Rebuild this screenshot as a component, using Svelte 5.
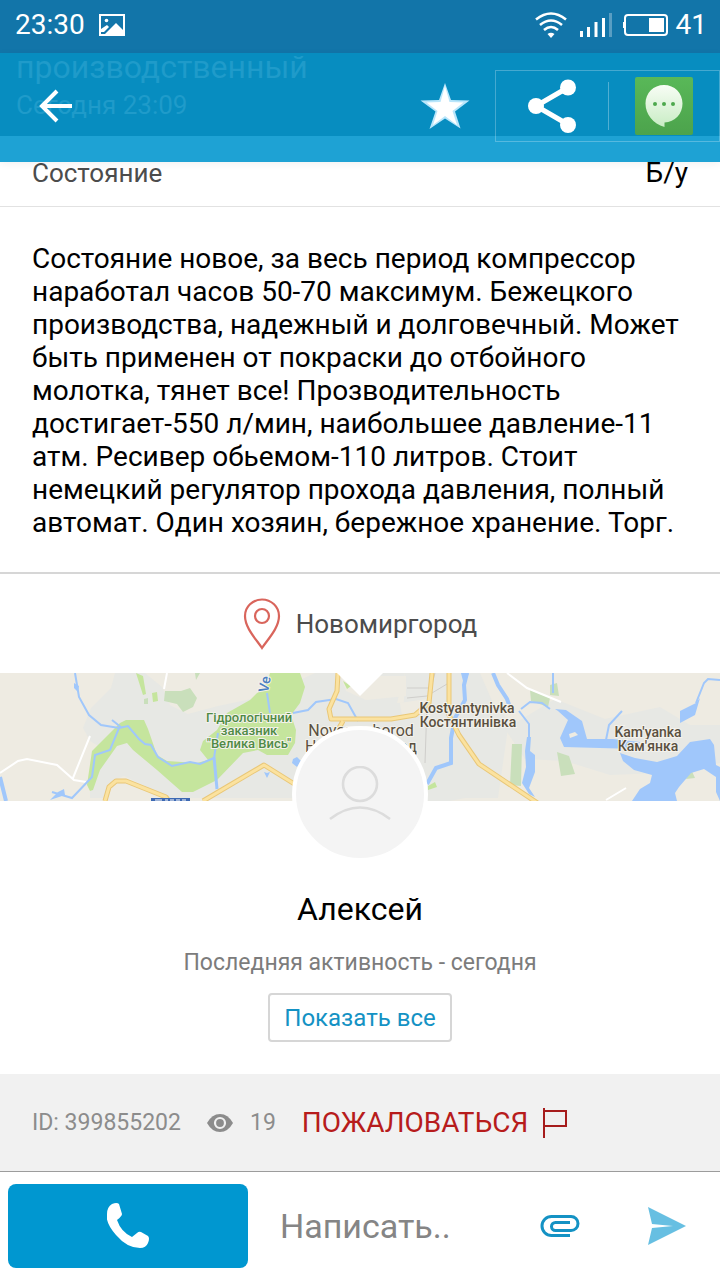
<script lang="ts">
	const ad = {
		title: 'производственный',
		posted: 'Сегодня 23:09',
		condition: 'Б/у',
		city: 'Новомиргород',
		id: '399855202',
		views: 19,
		description:
			'Состояние новое, за весь период компрессор наработал часов 50-70 максимум. Бежецкого производства, надежный и долговечный. Может быть применен от покраски до отбойного молотка, тянет все! Прозводительность достигает-550 л/мин, наибольшее давление-11 атм. Ресивер обьемом-110 литров. Стоит немецкий регулятор прохода давления, полный автомат. Один хозяин, бережное хранение. Торг.'
	};
	const seller = { name: 'Алексей', activity: 'сегодня' };

	let message = $state('');
</script>

<main class="screen">
	<div class="status">
		<span>23:30</span>
		<svg class="picture" width="26" height="22" viewBox="0 0 26 22">
			<path d="M1 1h24v20H1z" fill="none" stroke="#fff" stroke-width="2" />
			<path d="M6 20L17 9l8 8v4H6z" fill="#fff" />
			<path d="M2 15l6-4 2 2-5 5H2z" fill="#fff" />
			<circle cx="7.500" cy="6.500" r="1.800" fill="#fff" />
		</svg>
		<span class="grow"></span>
		<svg width="34" height="28" viewBox="0 0 34 28" fill="none" stroke="#fff" stroke-width="2.600">
			<path d="M2 8.500Q17-3.500 32 8.500M6 14q11-9 22 0M10 19q7-6 14 0" />
			<path d="M13.500 23q3.500-2.500 7 0L17 27z" fill="#fff" stroke="none" />
		</svg>
		<svg class="signal" width="32" height="26" viewBox="0 0 32 26" fill="#fff">
			<path d="M0 19h3v6H0zM7 15h3v10H7zM14.500 10h3v15h-3zM22 6h3v19h-3z" />
			<path d="M29 1h3v24h-3z" opacity=".3" />
		</svg>
		<svg class="battery" width="45" height="24" viewBox="0 0 45 24">
			<rect x="2" y="2" width="42" height="20" rx="3" fill="none" stroke="#fff" stroke-width="2" />
			<path d="M0 9h2v6H0zM26 5h15v14H26z" fill="#fff" />
		</svg>
		<span>41</span>
	</div>

	<header class="toolbar">
		<div class="under" aria-hidden="true">
			<div class="under-title">{ad.title}</div>
			<div class="under-date">{ad.posted}</div>
		</div>
		<button type="button" class="icon back" aria-label="Назад">
			<svg width="34" height="34" viewBox="0 0 34 34" fill="none" stroke="#fff" stroke-width="4">
				<path d="M18 2L3 17l15 15M2.500 17H33" />
			</svg>
		</button>
		<span class="grow"></span>
		<button type="button" class="icon star" aria-label="В избранное">
			<svg width="50" height="48" viewBox="0 0 50 48">
				<path d="M25 1l6 17 18.500.500-14.500 11 5.500 17L25 36.500 9.500 47l6-17.500L.500 18.500 19 18z" fill="#b9e6fb" />
				<path d="M25 4l4.500 16 14 .500-11 8.500 4.500 14-12-9-12 9 4.500-14-11-8.500 14-.500z" fill="#fff" />
			</svg>
		</button>
		<div class="share-box">
			<button type="button" class="icon share" aria-label="Поделиться">
				<svg width="50" height="54" viewBox="0 0 50 54" fill="#fff">
					<path d="M41 8.500L9 27l32 18.500" fill="none" stroke="#fff" stroke-width="5" />
					<circle cx="41" cy="8.500" r="8" />
					<circle cx="9" cy="27" r="8" />
					<circle cx="41" cy="46" r="8" />
				</svg>
			</button>
			<button type="button" class="icon sms" aria-label="Сообщения">
				<svg width="58" height="58" viewBox="0 0 58 58">
					<defs>
						<linearGradient id="tile" x2="0" y2="1">
							<stop offset="0" stop-color="#59b858" />
							<stop offset="1" stop-color="#4ca34c" />
						</linearGradient>
						<linearGradient id="bubble" x2="0" y2="1">
							<stop offset="0" stop-color="#f8fdf5" />
							<stop offset="1" stop-color="#c8ecc4" />
						</linearGradient>
					</defs>
					<rect width="58" height="58" rx="2" fill="url(#tile)" />
					<path d="M29 8c10.500 0 18.500 8 18.500 18.500S40 45 29.500 45.500V50C18 47 10.500 37 10.500 26.500S18.500 8 29 8z" fill="url(#bubble)" />
					<g fill="#4da84d">
						<circle cx="20" cy="27" r="2" />
						<circle cx="29" cy="27" r="2" />
						<circle cx="38" cy="27" r="2" />
					</g>
				</svg>
			</button>
		</div>
	</header>

	<div class="param">
		<span class="param-name">Состояние</span>
		<span class="param-value">{ad.condition}</span>
	</div>

	<p class="description">{ad.description}</p>

	<div class="location">
		<svg width="38" height="52" viewBox="0 0 38 52" fill="none" stroke="#d9655c" stroke-width="2.200">
			<path d="M19 50C13 41 2 30 2 18a17 16.500 0 0 1 34 0c0 12-11 23-17 32z" />
			<circle cx="19" cy="18" r="7" />
		</svg>
		<span>{ad.city}</span>
	</div>

	<div class="map">
		<svg viewBox="0 0 720 128" preserveAspectRatio="xMidYMid slice" role="img" aria-label="Карта">
			<rect width="720" height="128" fill="#eeebe2" />
			<!-- built-up land -->
			<g fill="#e7e8e4">
				<path d="M115 0h30l17 14 8 18 18 9 30-8 47-10 50-23h90l-8 30 80-4 26 9 5 20-10 70H90v-15l20-30-20-12-7-13 8-20 20-20z" />
				<path d="M405 0h75l13 30-3 90-40 8h-50z" />
				<path d="M555 26l50 20 55-12 30 18h30v38l-60 10-50 2-45-14-40-2-20-30z" />
			</g>
			<path d="M112 108l12-5 45 21-2 4h-60z" fill="#eeebe2" />
			<path d="M340 3h66v20l-40 4-20-9zM400 30l26-4v14l-24 3z" fill="#eeebe2" />
			<!-- parks -->
			<g fill="#c5e59d">
				<path d="M120 50l6-3h18l4 9 9 26 10 6 30 2 11-3-8-10 3-9 14-11 10-17 23-13 17-17 3-10h30l5 14-5 16-9 12 5 15-1 13-7 12h-21l-9-5-15 3-26 27-24 12h-11l-25-22-24-20-6-7-10 3-17 24-7 20-3 1-3-6 5-34z" />
				<path d="M136 0l7 3 3 18-3 1zM152 20l5-1 1 9-5 1zM428 113l7-4 2 5-9 3zM343 8l4 8 4-3z" />
			</g>
			<g fill="#c9dfbb">
				<path d="M165 18h16l9-3 7 10-4 9-10 5-6-8-13-3zM195 0h5l-4 7zM530 17l20 8-2 9-17-6zM550 12l7-2 2 13-9-1zM512 71h10l-1 42-11-1zM557 79l12 4 6 18-14 2zM690 94l5 11-9 1zM144 26l4-1v6h-4z" />
			</g>
			<!-- local roads -->
			<g fill="none" stroke="#fff" stroke-width="2">
				<path d="M0 100l18-12 9-2 30 6 17 15 12 2M73 105l17-42M507 0l20 15 34 14M606 127l20-12M167 0l-3 16" />
			</g>
			<path d="M435 0l-8 30-2 60M407 15h22M407 25l20-2 20-12" fill="none" stroke="#cfcecb" stroke-width="1" />
			<!-- water -->
			<g fill="none" stroke="#a0c7fb" stroke-width="2">
				<path d="M75 0l4 24 10 18 12 10 18 3 9-2 11 13 6 5 6 1 7 12 14 9 18-4 10 2 14-6 4-25M119 55l-9 22-15 5-3 22-20 21-20-6M112 47l10 8M267 20l3 20M293 40l15-3 8-8 20-3 12 4 10 18M521 36l9-7 12 1 8 6M519 38l10 13v15M553 0v20M606 67l3-15 13-14M696 30l8-20 4-4 12 1" />
			</g>
			<g fill="none" stroke="#a0c7fb" stroke-width="4">
				<path d="M467 0l-3 12 1 15-10 18-4 20v25l-15 5-9 16M493 0l5 12 9 14 5 14M0 104l6 24" />
				<path d="M214 84l3 32" stroke-width="3" />
			</g>
			<g fill="#a0c7fb">
				<path d="M527 64h4l-1 14 5 4v17l-6 16 6 9-6-3-7-11 4-16-1-16zM555 36l11 1 16 11 5 18 26 0 27 3-4 7-72-2-4-9 8-18-10-9zM620 80l15 5 22 4 20-6 13-14 20-3 4 6 2 20 4 2v10h-4l-12-8-13 4-12 14-4 6 2 8h-45l8-12 10-6 2-8-18-5-11-9zM680 38l16-8 4-5-5 17-15 8zM716 100h4v28l-4-9zM461 0h8l-5 12zM74 10l5 3-1 6-4-4zM50 127l8-8 6-3 1 6zM293 86l4-2 4 4-4 6-5-4zM264 99l3 1 3-1-3 6z" />
			</g>
			<path d="M569 61l6-2 3 3-8 3z" fill="#eeebe2" />
			<!-- highways -->
			<g fill="none" stroke-linejoin="round">
				<path d="M105 128l4-14 7-6h10l40 16 4 6M203 128l61-36 32 20M338 0l-1 18-8 18 2 10h60l24-4 14-12 3-30M449 0v42l10 20 20 29 60 40M335 62l8-14" stroke="#e9c777" stroke-width="5" />
				<path d="M105 128l4-14 7-6h10l40 16 4 6M203 128l61-36 32 20M338 0l-1 18-8 18 2 10h60l24-4 14-12 3-30M449 0v42l10 20 20 29 60 40M335 62l8-14" stroke="#fbe29f" stroke-width="3" />
			</g>
			<!-- road shield, cropped by the map's edge -->
			<rect x="151" y="125" width="39" height="12" fill="#3d69b3" />
			<path d="M155 127h7M165 127h3M170 127h4M176 127h4M182 127h4" stroke="#fff" stroke-width="1" />
			<g class="labels" text-anchor="middle">
				<g class="reserve">
					<text x="249" y="49">Гідрологічний</text>
					<text x="249" y="62">заказник</text>
					<text x="249" y="75">"Велика Вись"</text>
				</g>
				<text class="river" transform="translate(268 20) rotate(-80)" text-anchor="start">Ve</text>
				<g class="town">
					<text x="361" y="63">Novomyrhorod</text>
					<text x="361" y="79">Новомиргород</text>
				</g>
				<text x="467" y="40">Kostyantynivka</text>
				<text x="468" y="54">Костянтинівка</text>
				<text x="648" y="64">Kam'yanka</text>
				<text x="648" y="78">Кам'янка</text>
			</g>
		</svg>
		<span class="notch"></span>
	</div>

	<section class="seller">
		<div class="avatar">
			<svg width="64" height="56" viewBox="0 0 64 56" fill="none" stroke="#dcdcdc" stroke-width="2.600">
				<circle cx="32" cy="18" r="17" />
				<path d="M2 53Q32 30 62 53" />
			</svg>
		</div>
		<h1>{seller.name}</h1>
		<p class="activity">Последняя активность - {seller.activity}</p>
		<button type="button" class="all">Показать все</button>
	</section>

	<div class="meta">
		<span>ID: {ad.id}</span>
		<svg class="eye" width="26" height="18" viewBox="0 0 26 18">
			<path d="M0 9Q5 0 13 0t13 9q-5 9-13 9T0 9z" fill="#8c8c8c" />
			<circle cx="13" cy="9" r="5" fill="#8c8c8c" stroke="#f1f1f1" stroke-width="2.200" />
		</svg>
		<span>{ad.views}</span>
		<button type="button" class="complain">
			Пожаловаться
			<svg width="26" height="30" viewBox="0 0 26 30" fill="none" stroke="#a61c1c" stroke-width="2">
				<path d="M2 0v30M2 3h22v15H2" />
			</svg>
		</button>
	</div>

	<form class="reply" onsubmit={(e) => e.preventDefault()}>
		<button type="button" class="call" aria-label="Позвонить">
			<svg width="42" height="46" viewBox="0 0 42 46">
				<path d="M5 1q5-2 7 0l3 10q0 2-5 6 4 12 15 17l5-4q2-2 4-1l7 4q2 2 0 7-2 5-8 5-13 0-24-13T0 11q0-7 5-10z" fill="#fff" />
			</svg>
		</button>
		<input type="text" placeholder="Написать.." aria-label="Написать" bind:value={message} />
		<button type="button" class="icon clip" aria-label="Прикрепить файл">
			<svg width="40" height="24" viewBox="0 0 40 24" fill="none" stroke="#1492c4" stroke-width="3">
				<path d="M30 21.500H11.500a9.500 9.500 0 0 1 0-19H31a7 7 0 0 1 0 14H15.500a4 4 0 0 1 0-8H30" />
			</svg>
		</button>
		<button type="submit" class="icon send" aria-label="Отправить">
			<svg width="38" height="38" viewBox="0 0 38 38">
				<path d="M0 0l38 19L0 38l4-17 21-2-21-2z" fill="#67bfe2" />
			</svg>
		</button>
	</form>
</main>

<style>
	:global(body) {
		margin: 0;
		background: #fff;
	}
	.screen {
		display: flex;
		flex-direction: column;
		min-height: 100vh;
		font-family: Roboto, 'Noto Sans', sans-serif;
		font-size: 26px;
		color: #000;
		background: #fff;
	}
	button {
		font: inherit;
		cursor: pointer;
	}
	svg {
		display: block;
		flex: none;
	}
	.icon {
		display: flex;
		padding: 0;
		border: 0;
		background: none;
	}
	.grow {
		flex: 1;
	}

	.status {
		display: flex;
		align-items: center;
		height: 49px;
		padding: 0 13px 4px 15px;
		font-size: 28px;
		color: #fff;
		background: #1275a9;
	}
	.picture {
		margin-left: 14px;
	}
	.signal {
		margin: 0 11px 0 12px;
	}
	.battery {
		margin-right: 8px;
	}

	.toolbar {
		position: relative;
		display: flex;
		align-items: center;
		height: 106px;
		padding-bottom: 3px;
		background: linear-gradient(#078dc0 0 83px, #1ea2d4 83px);
		box-shadow: 0 2px 8px rgba(0, 0, 0, 0.06);
	}
	.under {
		position: absolute;
		top: 0;
		left: 16px;
		color: #1f9bca;
	}
	.under-title {
		font-size: 32px;
		line-height: 28px;
	}
	.under-date {
		margin-top: 8px;
		line-height: 32px;
	}
	.back {
		position: relative;
		margin-left: 39px;
	}
	.star {
		margin-right: 25px;
	}
	.share-box {
		display: flex;
		align-items: center;
		box-sizing: border-box;
		height: 72px;
		border: 1px solid rgba(255, 255, 255, 0.25);
	}
	.share {
		padding: 0 31px;
	}
	.sms {
		position: relative;
		padding: 0 26px 0 27px;
	}
	.sms::before {
		content: '';
		position: absolute;
		left: 0;
		top: 5px;
		width: 1px;
		height: 48px;
		background: rgba(255, 255, 255, 0.3);
	}

	.param {
		display: flex;
		justify-content: space-between;
		padding: 0 32px 22px;
		line-height: 22px;
		border-bottom: 1px solid #e2e2e2;
	}
	.param-name {
		color: #4c4c4c;
	}
	.param-value {
		font-size: 28px;
	}

	.description {
		margin: 0;
		padding: 35px 32px 33px;
		font-size: 28px;
		line-height: 33px;
		border-bottom: 2px solid #d6d6d6;
	}

	.location {
		display: flex;
		align-items: center;
		justify-content: center;
		gap: 15px;
		height: 99px;
		color: #4c4c4c;
	}

	.map {
		position: relative;
		height: 128px;
	}
	.map svg {
		width: 100%;
		height: 100%;
	}
	.labels {
		font-size: 14px;
		font-weight: 500;
		fill: #5a503f;
		stroke: #f4f2ec;
		stroke-width: 2px;
		paint-order: stroke;
	}
	.reserve {
		font-size: 13px;
		fill: #4f8a45;
	}
	.river {
		fill: #4a7fc0;
	}
	.town {
		font-size: 16px;
		font-weight: 400;
	}
	.notch {
		position: absolute;
		top: 0;
		left: 50%;
		margin-left: -23px;
		border: 23px solid transparent;
		border-top-color: #fff;
		border-bottom: 0;
	}

	.seller {
		display: flex;
		flex-direction: column;
		align-items: center;
		padding-bottom: 32px;
	}
	.avatar {
		position: relative;
		display: flex;
		align-items: center;
		justify-content: center;
		width: 128px;
		height: 128px;
		margin-top: -75px;
		border: 4px solid #fff;
		border-radius: 50%;
		background: #f4f4f4;
	}
	h1 {
		margin: 27px 0 0;
		font-size: 32px;
		font-weight: 400;
		line-height: 40px;
	}
	.activity {
		margin: 19px 0 15px;
		font-size: 23px;
		line-height: 30px;
		color: #7c7c7c;
	}
	.all {
		height: 49px;
		padding: 0 14px;
		font-size: 24px;
		color: #1492c4;
		background: #fff;
		border: 2px solid #d6d6d6;
		border-radius: 4px;
	}

	.meta {
		display: flex;
		align-items: center;
		height: 97px;
		padding: 0 32px;
		font-size: 23px;
		color: #8c8c8c;
		background: #f1f1f1;
		border-bottom: 1px solid #9c9c9c;
	}
	.eye {
		margin: 0 17px 0 26px;
	}
	.complain {
		display: flex;
		align-items: center;
		gap: 14px;
		margin-left: 26px;
		padding: 0;
		font-size: 28px;
		text-transform: uppercase;
		color: #b71c1c;
		background: none;
		border: 0;
	}

	.reply {
		display: flex;
		align-items: center;
		padding: 12px 34px 12px 8px;
	}
	.call {
		display: flex;
		align-items: center;
		justify-content: center;
		flex: 0 0 35.4%;
		height: 84px;
		padding: 0;
		background: #0097d0;
		border: 0;
		border-radius: 8px;
	}
	input {
		flex: 1;
		min-width: 0;
		padding: 0 0 0 32px;
		font: inherit;
		font-size: 34px;
		border: 0;
		outline: 0;
		background: none;
	}
	input::placeholder {
		color: #858585;
		opacity: 1;
	}
	.send {
		margin-left: 68px;
	}
</style>
